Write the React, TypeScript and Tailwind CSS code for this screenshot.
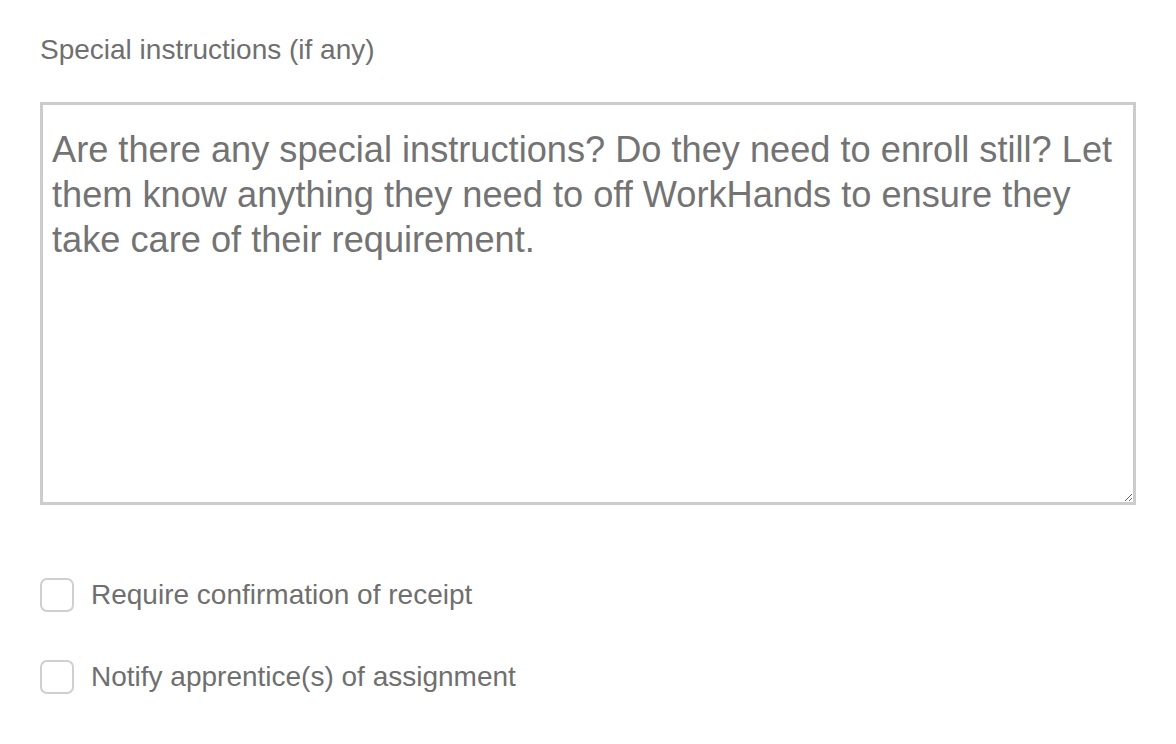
export default function App() {
  return (
    <div className="min-h-screen bg-white px-10 pt-[34px] font-['Liberation_Sans',Arial,sans-serif]">
      <label className="block text-[28px] leading-[32px] text-[#6f6f6f]">Special instructions (if any)</label>
      <textarea
        className="mt-[36px] block h-[403px] w-[1096px] resize-y rounded-none border-[3px] border-[#cccccc] px-[9px] pt-[22px] text-[36.2px] leading-[45px] text-[#737373] outline-none placeholder:text-[#737373]"
        placeholder="Are there any special instructions? Do they need to enroll still? Let them know anything they need to off WorkHands to ensure they take care of their requirement."
      />
      <div className="mt-[73px] flex flex-col gap-[48px]">
        <Check label="Require confirmation of receipt" />
        <Check label="Notify apprentice(s) of assignment" />
      </div>
    </div>
  );
}

function Check({ label }: { label: string }) {
  return (
    <label className="flex items-center gap-[17px]">
      <span className="h-[34px] w-[34px] shrink-0 rounded-[7px] border-2 border-[#cfcfcf] bg-white" />
      <span className="text-[28px] leading-[34px] text-[#6f6f6f]">{label}</span>
    </label>
  );
}
